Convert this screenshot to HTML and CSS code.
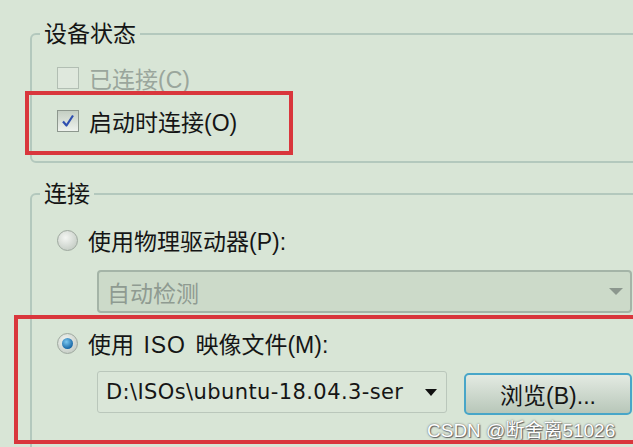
FILE: index.html
```html
<!DOCTYPE html>
<html lang="zh-CN">
<head>
    <meta charset="UTF-8">
    <meta name="viewport" content="width=device-width, initial-scale=1.0">
    <title>CD/DVD 设置</title>
    <link rel="stylesheet" href="styles.css">
</head>
<body>
    <div class="page">
        <fieldset class="group group-status">
            <legend>设备状态</legend>
            <div class="group-body">
                <label class="row disabled">
                    <span class="check"></span>
                    <span>已连接(C)</span>
                </label>
                <label class="row">
                    <span class="check checked">
                        <svg width="14" height="14" viewBox="0 0 14 14"><path d="M2 7.5 L5.5 11.5 L12 1.5" fill="none" stroke="#2f4fb0" stroke-width="2.2" stroke-linejoin="round"/></svg>
                    </span>
                    <span>启动时连接(O)</span>
                </label>
            </div>
        </fieldset>

        <fieldset class="group group-connect">
            <legend>连接</legend>
            <div class="group-body">
                <label class="row">
                    <span class="radio"></span>
                    <span>使用物理驱动器(P):</span>
                </label>
                <div class="select disabled-select">
                    <span>自动检测</span>
                    <span class="arrow grey"></span>
                </div>
                <label class="row row-iso">
                    <span class="radio on"></span>
                    <span>使用 <span class="latin">ISO</span> 映像文件(M):</span>
                </label>
                <div class="file-line">
                    <div class="select combo">
                        <span class="path">D:\ISOs\ubuntu-18.04.3-ser</span>
                        <span class="arrow"></span>
                    </div>
                    <button class="browse">浏览(B)...</button>
                </div>
            </div>
        </fieldset>

        <div class="mark mark-one"></div>
        <div class="mark mark-two"></div>
        <div class="watermark">CSDN @断舍离51026</div>
    </div>
</body>
</html>
```

FILE: styles.css
```css
body {
    margin: 0;
    background-color: #d8e5d6;
    font-family: 'Liberation Sans', 'Noto Sans CJK SC', sans-serif;
    font-size: 23px;
    color: #151515;
}
.page {
    position: relative;
    width: 633px;
    height: 447px;
    overflow: hidden;
    padding: 21px 0 0 30px;
    box-sizing: border-box;
}
.group {
    margin: 0 -20px 0 0;
    padding: 0;
    border: 2px solid #b3c8bd;
    border-radius: 6px;
}
.group legend {
    margin-left: 8px;
    padding: 0 4px;
    line-height: 26px;
}
.group-body {
    padding-left: 25px;
}
.group-status .group-body {
    padding-top: 9px;
    padding-bottom: 19px;
}
.group-connect {
    margin-top: 18px;
    height: 400px;
}
.group-connect .group-body {
    padding-top: 13px;
}
.row {
    display: flex;
    align-items: center;
    gap: 10px;
    height: 43px;
}
.group-connect .row {
    height: 40px;
}
.disabled {
    color: #9aa69c;
}
.latin {
    letter-spacing: 1px;
    margin: 0 3px;
}
.check {
    width: 20px;
    height: 20px;
    border: 1px solid #b2beb3;
    background-color: #dfe8dd;
    display: flex;
    align-items: center;
    justify-content: center;
}
.check.checked {
    border-color: #8d978e;
    background: linear-gradient(#c4cec3, #eef2ed);
}
.radio {
    width: 19px;
    height: 19px;
    border-radius: 50%;
    border: 1px solid #9ea89f;
    background: radial-gradient(circle at 40% 35%, #f4f6f3, #b9c2b9);
    position: relative;
}
.radio.on::after {
    content: "";
    position: absolute;
    left: 4px;
    top: 4px;
    width: 11px;
    height: 11px;
    border-radius: 50%;
    background: radial-gradient(circle at 40% 35%, #7cc8f0, #1a6aa8 70%, #0e3f6e);
}
.select {
    display: flex;
    align-items: center;
    box-sizing: border-box;
    margin-left: 40px;
    padding-left: 8px;
    border-radius: 4px;
}
.disabled-select {
    width: 535px;
    height: 43px;
    margin-top: 10px;
    border: 2px solid #a4b4a7;
    background-color: #ccdac9;
    color: #8f9b91;
}
.arrow {
    margin-left: auto;
    margin-right: 9px;
    width: 0;
    height: 0;
    border-left: 6px solid transparent;
    border-right: 6px solid transparent;
    border-top: 7px solid #111;
}
.arrow.grey {
    border-left-width: 7px;
    border-right-width: 7px;
    border-top-color: #8c978e;
    margin-right: 7px;
}
.row-iso {
    margin-top: 10px;
}
.file-line {
    display: flex;
    align-items: flex-start;
    gap: 17px;
    margin-top: 8px;
}
.combo {
    width: 350px;
    height: 42px;
    border: 1px solid #bac7bb;
    background-color: #dae6d8;
    border-radius: 3px;
}
.path {
    white-space: nowrap;
    overflow: hidden;
    width: 305px;
    font-family: 'DejaVu Sans', sans-serif;
    font-size: 21px;
    letter-spacing: 0.4px;
}
.browse {
    margin-top: 2px;
    width: 168px;
    height: 42px;
    border: 2px solid #48a6c8;
    border-radius: 5px;
    background: linear-gradient(#e3eae2, #b8c7b9);
    font-family: inherit;
    font-size: 23px;
    color: #151515;
}
.mark {
    position: absolute;
    border: 4px solid #d9363c;
}
.mark-one {
    left: 25px;
    top: 91px;
    width: 260px;
    height: 56px;
}
.mark-two {
    left: 14px;
    top: 315px;
    width: 640px;
    height: 121px;
}
.watermark {
    position: absolute;
    left: 427px;
    top: 415px;
    font-size: 19px;
    color: #fff;
    text-shadow: 0 0 2px #555, 1px 1px 1px #666;
}
```
